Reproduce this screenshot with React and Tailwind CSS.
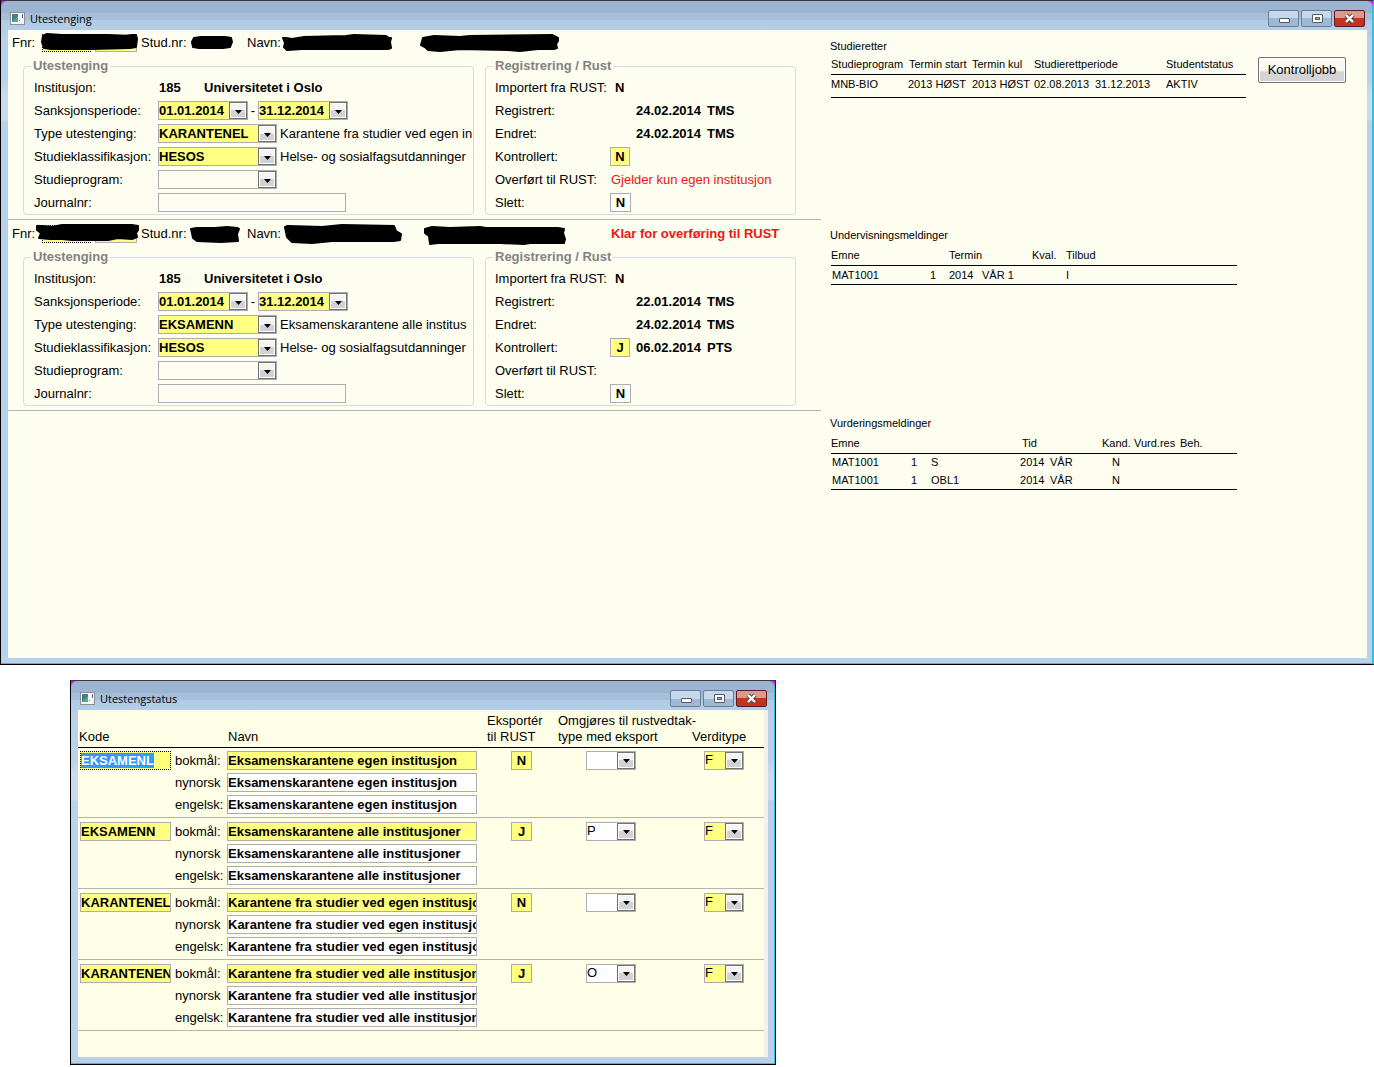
import clsx from "clsx";

const records = [
  {
    id: "r1",
    status: "",
    type: "KARANTENEL",
    typeText: "Karantene fra studier ved egen in",
    registered: "24.02.2014",
    changed: "24.02.2014",
    controlled: "N",
    controlledDate: "",
    controlledBy: "",
    transferred: "Gjelder kun egen institusjon",
    marks: {
      fnr: "M1 6 L5 4 L20 5 L66 5 L84 6 L90 5 L94 5 L95 9 L94 17 L88 18 L50 19 L14 19 L9 19 L2 18 L0 12 Z",
      studnr: "M3 8 L10 7 L34 7 L40 8 L41 12 L39 17 L32 18 L8 18 L2 17 L1 12 Z",
      name1: "M1 8 L4 8 L10 9 L22 7 L64 6 L72 5 L104 6 L107 8 L109 8 L108 12 L109 18 L106 19 L84 19 L20 19 L5 20 L2 17 L3 13 Z",
      name2: "M3 8 L14 6 L40 7 L50 6 L132 5 L138 8 L138 11 L136 14 L137 18 L134 19 L118 19 L100 21 L88 20 L40 19 L20 21 L8 20 L5 17 L1 15 Z",
    },
  },
  {
    id: "r2",
    status: "Klar for overføring til RUST",
    type: "EKSAMENN",
    typeText: "Eksamenskarantene alle institus",
    registered: "22.01.2014",
    changed: "24.02.2014",
    controlled: "J",
    controlledDate: "06.02.2014",
    controlledBy: "PTS",
    transferred: "",
    marks: {
      fnr: "M-5 5 L0 5 L10 6 L20 4 L60 4 L90 4 L96 5 L96 9 L94 12 L95 16 L90 18 L76 17 L66 19 L30 19 L20 18 L8 18 L-3 17 L-1 12 L-5 9 Z",
      studnr: "M0 8 L6 7 L24 7 L36 6 L46 7 L48 8 L46 13 L47 20 L30 21 L6 20 L2 17 L1 12 Z",
      name1: "M3 6 L6 5 L40 6 L60 4 L112 5 L114 10 L119 13 L118 19 L112 20 L50 20 L30 22 L10 21 L5 16 Z",
      name2: "M5 8 L12 6 L30 7 L60 6 L66 7 L138 7 L144 8 L143 12 L145 18 L144 22 L110 22 L104 23 L80 22 L18 22 L10 23 L9 15 L5 12 Z",
    },
  },
];

const statuses = [
  { code: "EKSAMENL", name: "Eksamenskarantene egen institusjon", exported: "N", convert: "" },
  { code: "EKSAMENN", name: "Eksamenskarantene alle institusjoner", exported: "J", convert: "P" },
  { code: "KARANTENEL", name: "Karantene fra studier ved egen institusjon", exported: "N", convert: "" },
  { code: "KARANTENEN", name: "Karantene fra studier ved alle institusjoner", exported: "J", convert: "O" },
];

const languages = ["bokmål:", "nynorsk", "engelsk:"];

function FormIcon() {
  return (
    <svg width="15" height="13" viewBox="0 0 15 13">
      <rect x="0.5" y="0.5" width="14" height="12" fill="#f4f6f8" stroke="#8b8f96" />
      <rect x="2" y="2" width="6" height="8" fill="#3f7f8f" />
      <path d="M2 10 L8 4 V10 Z" fill="#63a878" />
      <rect x="9" y="8" width="1" height="1" fill="#7a8894" />
      <rect x="12" y="2" width="1" height="4" fill="#4a6d9c" />
    </svg>
  );
}

function WindowButtons() {
  const plain =
    "flex h-[17px] w-[31px] items-center justify-center rounded-xs border border-[#6b7c93] bg-linear-to-b from-[#c6d8eb] from-50% to-[#9fb9d4] to-50%";
  return (
    <div className="flex gap-0.5">
      <button type="button" aria-label="Minimer" className={plain}>
        <svg width="12" height="11" viewBox="0 0 12 11">
          <rect x="1.5" y="5.5" width="10" height="4" rx="0.5" fill="#fff" stroke="#545b66" />
        </svg>
      </button>
      <button type="button" aria-label="Maksimer" className={plain}>
        <svg width="12" height="11" viewBox="0 0 12 11">
          <rect x="1.5" y="1.5" width="10" height="8" rx="0.5" fill="#fff" stroke="#545b66" />
          <rect x="4.5" y="4.5" width="4" height="2" fill="#9fb9d4" stroke="#545b66" />
        </svg>
      </button>
      <button
        type="button"
        aria-label="Lukk"
        className="flex h-[17px] w-[31px] items-center justify-center rounded-xs border border-[#5b1a22] bg-linear-to-b from-[#dd9a8c] from-45% to-[#c8301f] to-45%"
      >
        <svg width="13" height="11" viewBox="0 0 13 11">
          <path d="M3 2 L10 9 M10 2 L3 9" stroke="#4e4a58" strokeWidth="4.4" />
          <path d="M3 2 L10 9 M10 2 L3 9" stroke="#fff" strokeWidth="2.4" />
        </svg>
      </button>
    </div>
  );
}

function Window({ title, className, children }) {
  return (
    <section className={clsx("border border-black border-t-[#3a3a42] bg-[#ff00ff]", className)}>
      <div className="rounded-t-md border-r border-b border-[#35bfdc] bg-[linear-gradient(to_bottom,#9bb4d2_12px,#a5bfdb_12px,#a5bfdb_19px,#b1cbe5_19px,#b9d1ea_40px,#b9d1ea_80px,#c9dbee_92px,#c9dbee_119px,#b9d1ea_120px)] pr-[5px] pb-[5px] pl-[7px]">
        <header className="flex h-[29px] items-center justify-between pt-1.5 pr-0.5 pl-0.5">
          <div className="flex items-center gap-[5px]">
            <FormIcon />
            <h1 className="font-['Open_Sans',sans-serif] text-[11px] leading-4">{title}</h1>
          </div>
          <WindowButtons />
        </header>
        {children}
      </div>
    </section>
  );
}

function TextField({ yellow, className, ...props }) {
  return (
    <input
      type="text"
      className={clsx(
        "block h-[19px] border border-[#abadb3] px-0 font-bold outline-none",
        yellow ? "bg-[#ffff80]" : "bg-transparent",
        className
      )}
      {...props}
    />
  );
}

// The arrow shares the select's grid cell, so a click on it still opens the list
function Combo({ value, yellow, className, ...props }) {
  return (
    <span className={clsx("inline-grid h-[19px]", className)}>
      <select
        defaultValue={value}
        className={clsx(
          "col-start-1 row-start-1 h-[19px] w-full appearance-none border border-[#abadb3] pr-4 outline-none",
          yellow ? "bg-[#ffff80]" : "bg-transparent"
        )}
        {...props}
      >
        <option value={value}>{value}</option>
      </select>
      <span className="pointer-events-none col-start-1 row-start-1 mr-px flex h-[17px] w-[18px] items-center justify-center self-center justify-self-end border border-[#707070] bg-linear-to-b from-[#f4f4f2] from-50% to-[#d2d2d2] to-50% pt-0.5 ring-1 ring-white ring-inset">
        <svg width="7" height="4" viewBox="0 0 7 4">
          <path d="M0 0 H7 L3.5 4 Z" fill="#000" />
        </svg>
      </span>
    </span>
  );
}

function Mark({ d }) {
  return (
    <svg width="10" height="26" className="overflow-visible" aria-hidden="true">
      <path d={d} fill="#000" stroke="#000" strokeWidth="2" strokeLinejoin="round" />
    </svg>
  );
}

function Group({ title, className, children }) {
  return (
    <fieldset className={clsx("rounded-sm border border-[#d3dbe2]", className)}>
      <legend className="ml-[7px] h-5 px-0.5 leading-5 font-bold text-[#828282]">{title}</legend>
      {children}
    </fieldset>
  );
}

function Row({ label, htmlFor, cols, children }) {
  const Tag = htmlFor ? "label" : "span";
  return (
    <div className={clsx("grid h-[23px] items-center", cols)}>
      <Tag htmlFor={htmlFor} className="whitespace-nowrap">
        {label}
      </Tag>
      {children}
    </div>
  );
}

function Record({ record }) {
  const { id, marks } = record;
  const left = "grid-cols-[124px_1fr] pl-2.5";
  const right = "grid-cols-[115px_26px_71px_1fr] pl-[9px]";
  return (
    <article className="border-b border-[#b4b4b4] pt-px pb-1 first:pt-0">
      <div className="grid h-[26px] grid-cols-[30px_99px_50px_56px_35px_138px_191px_1fr] items-center pl-1 whitespace-nowrap">
        <label htmlFor={`${id}-fnr`}>Fnr:</label>
        <div className="relative flex gap-1">
          <input id={`${id}-fnr`} className="h-[18px] w-[49px] border border-dotted border-black bg-[#ffff80] outline-none" />
          <input aria-label="Personnr" className="h-[18px] w-[42px] border border-[#abadb3] bg-[#ffff80] outline-none" />
          <div className="absolute -top-1 left-0">
            <Mark d={marks.fnr} />
          </div>
        </div>
        <span>Stud.nr:</span>
        <Mark d={marks.studnr} />
        <span>Navn:</span>
        <Mark d={marks.name1} />
        <Mark d={marks.name2} />
        <strong className="text-[#f01414]">{record.status}</strong>
      </div>

      <div className="flex gap-[11px] pl-[15px]">
        <Group title="Utestenging" className="w-[451px]">
          <Row label="Institusjon:" cols={left}>
            <div className="flex pl-px font-bold">
              <span className="w-[45px]">185</span>
              <span>Universitetet i Oslo</span>
            </div>
          </Row>
          <Row label="Sanksjonsperiode:" htmlFor={`${id}-from`} cols={left}>
            <div className="flex items-center">
              <Combo id={`${id}-from`} value="01.01.2014" yellow className="w-[90px] font-bold" />
              <span className="w-2.5 text-center">-</span>
              <Combo aria-label="Til dato" value="31.12.2014" yellow className="w-[90px] font-bold" />
            </div>
          </Row>
          <Row label="Type utestenging:" htmlFor={`${id}-type`} cols={left}>
            <div className="flex items-center gap-[3px]">
              <Combo id={`${id}-type`} value={record.type} yellow className="w-[119px] shrink-0 font-bold" />
              <span className="whitespace-nowrap">{record.typeText}</span>
            </div>
          </Row>
          <Row label="Studieklassifikasjon:" htmlFor={`${id}-class`} cols={left}>
            <div className="flex items-center gap-[3px]">
              <Combo id={`${id}-class`} value="HESOS" yellow className="w-[119px] shrink-0 font-bold" />
              <span className="whitespace-nowrap">Helse- og sosialfagsutdanninger</span>
            </div>
          </Row>
          <Row label="Studieprogram:" htmlFor={`${id}-program`} cols={left}>
            <Combo id={`${id}-program`} value="" className="w-[119px]" />
          </Row>
          <Row label="Journalnr:" htmlFor={`${id}-journal`} cols={left}>
            <TextField id={`${id}-journal`} className="w-[188px]" />
          </Row>
        </Group>

        <Group title="Registrering / Rust" className="w-[311px]">
          <Row label="Importert fra RUST:" cols={right}>
            <strong className="pl-[5px]">N</strong>
          </Row>
          <Row label="Registrert:" cols={right}>
            <strong className="col-start-3">{record.registered}</strong>
            <strong>TMS</strong>
          </Row>
          <Row label="Endret:" cols={right}>
            <strong className="col-start-3">{record.changed}</strong>
            <strong>TMS</strong>
          </Row>
          <Row label="Kontrollert:" htmlFor={`${id}-control`} cols={right}>
            <TextField id={`${id}-control`} defaultValue={record.controlled} yellow className="w-5 text-center" />
            <strong>{record.controlledDate}</strong>
            <strong>{record.controlledBy}</strong>
          </Row>
          <Row label="Overført til RUST:" cols={right}>
            <span className="col-span-3 pl-px text-[#f01414]">{record.transferred}</span>
          </Row>
          <Row label="Slett:" htmlFor={`${id}-delete`} cols={right}>
            <TextField id={`${id}-delete`} defaultValue="N" className="w-[21px] text-center" />
          </Row>
        </Group>
      </div>
    </article>
  );
}

function Columns({ widths }) {
  return (
    <colgroup>
      {widths.map((w, i) => (
        <col key={i} className={w} />
      ))}
    </colgroup>
  );
}

const tableClass = "table-fixed border-collapse text-left leading-4 whitespace-nowrap [&_th]:h-5 [&_th]:p-0 [&_th]:font-normal";

function Reports() {
  return (
    <div className="w-[416px] pt-2 text-[11px]">
      <section className="min-h-[189px]">
        <h2 className="leading-4">Studieretter</h2>
        <table className={clsx(tableClass, "ml-px w-[415px]")}>
          <Columns widths={["w-[77px]", "w-[64px]", "w-[62px]", "w-[61px]", "w-[71px]", ""]} />
          <thead>
            <tr className="border-b border-black">
              <th>Studieprogram</th>
              <th className="pl-px!">Termin start</th>
              <th>Termin kul</th>
              <th colSpan={2}>Studierettperiode</th>
              <th>Studentstatus</th>
            </tr>
          </thead>
          <tbody>
            <tr className="h-[23px] border-b border-black [&_td]:pb-1">
              <td>MNB-BIO</td>
              <td>2013 HØST</td>
              <td>2013 HØST</td>
              <td>02.08.2013</td>
              <td>31.12.2013</td>
              <td>AKTIV</td>
            </tr>
          </tbody>
        </table>
      </section>

      <section className="min-h-[188px]">
        <h2 className="mb-0.5 leading-4">Undervisningsmeldinger</h2>
        <table className={clsx(tableClass, "ml-px w-[406px]")}>
          <Columns widths={["w-[99px]", "w-[19px]", "w-[33px]", "w-[50px]", "w-[34px]", ""]} />
          <thead>
            <tr className="border-b border-black">
              <th colSpan={2}>Emne</th>
              <th colSpan={2}>Termin</th>
              <th>Kval.</th>
              <th>Tilbud</th>
            </tr>
          </thead>
          <tbody>
            <tr className="h-[19px] border-b border-black">
              <td className="pl-px">MAT1001</td>
              <td>1</td>
              <td>2014</td>
              <td>VÅR 1</td>
              <td />
              <td>I</td>
            </tr>
          </tbody>
        </table>
      </section>

      <section>
        <h2 className="mb-0.5 leading-4">Vurderingsmeldinger</h2>
        <table className={clsx(tableClass, "ml-px w-[406px]")}>
          <Columns
            widths={["w-[80px]", "w-[20px]", "w-[89px]", "w-[30px]", "w-[52px]", "w-[32px]", "w-[46px]", ""]}
          />
          <thead>
            <tr className="border-b border-black">
              <th colSpan={3}>Emne</th>
              <th colSpan={2} className="pl-0.5!">Tid</th>
              <th>Kand.</th>
              <th>Vurd.res</th>
              <th>Beh.</th>
            </tr>
          </thead>
          <tbody className="border-b border-black">
            {["S", "OBL1"].map((part) => (
              <tr key={part} className="h-[18px]">
                <td className="pl-px">MAT1001</td>
                <td>1</td>
                <td>{part}</td>
                <td>2014</td>
                <td>VÅR</td>
                <td className="pl-2.5">N</td>
                <td />
                <td />
              </tr>
            ))}
          </tbody>
        </table>
      </section>
    </div>
  );
}

function StatusTable() {
  return (
    <table className="w-full table-fixed border-collapse text-left whitespace-nowrap [&_td]:p-0 [&_td]:align-top [&_th]:p-0 [&_th]:pb-0.5 [&_th]:align-bottom [&_th]:font-normal">
      <Columns widths={["w-[97px]", "w-[52px]", "w-[260px]", "w-[71px]", "w-[134px]", ""]} />
      <thead>
        <tr className="h-[37px] border-b border-black leading-4">
          <th className="pl-px!">Kode</th>
          <th />
          <th className="pl-px!">Navn</th>
          <th>
            Eksportér
            <br />
            til RUST
          </th>
          <th>
            Omgjøres til rustvedtak-
            <br />
            type med eksport
          </th>
          <th>Verditype</th>
        </tr>
      </thead>
      <tbody>
        {statuses.map((status, i) => (
          <tr key={status.code} className="h-[71px] border-b border-[#b4b4b4] first:h-[70px] [&_td]:pt-1 first:[&_td]:pt-[3px]">
            <td>
              <TextField
                aria-label="Kode"
                defaultValue={status.code}
                yellow
                autoFocus={i === 0}
                onFocus={(e) => e.target.select()}
                className="ml-0.5 w-[91px] selection:bg-[#3399ff] selection:text-white focus:border-dotted focus:border-black"
              />
            </td>
            <td>
              <div className="flex flex-col gap-[3px] leading-[19px]">
                {languages.map((language, n) => (
                  <label key={language} htmlFor={`name-${i}-${n}`}>
                    {language}
                  </label>
                ))}
              </div>
            </td>
            <td>
              <div className="flex flex-col gap-[3px]">
                {languages.map((language, n) => (
                  <TextField
                    key={language}
                    id={`name-${i}-${n}`}
                    defaultValue={status.name}
                    yellow={n === 0}
                    className={clsx("w-[250px]", n > 0 && "bg-white!")}
                  />
                ))}
              </div>
            </td>
            <td>
              <TextField
                aria-label="Eksportér til RUST"
                defaultValue={status.exported}
                yellow
                className="ml-6 w-[21px] text-center"
              />
            </td>
            <td>
              <Combo aria-label="Omgjøres til" value={status.convert} className="ml-7 w-[50px] bg-white" />
            </td>
            <td>
              <Combo aria-label="Verditype" value="F" yellow className="ml-3 w-10" />
            </td>
          </tr>
        ))}
      </tbody>
    </table>
  );
}

export default function App() {
  return (
    <div className="flex min-w-[1374px] flex-col items-start gap-[15px] bg-white font-['Liberation_Sans',Arial,sans-serif] text-[13px] leading-4 text-black">
      <Window title="Utestenging" className="w-full border-r-[#35bfdc]!">
        <main className="flex min-h-[628px] bg-[#fdfdf0]">
          <div className="w-[813px] shrink-0">
            {records.map((record) => (
              <Record key={record.id} record={record} />
            ))}
          </div>
          <div className="flex flex-1 items-start gap-3 pl-[9px]">
            <Reports />
            <button
              type="button"
              className="mt-[27px] h-[26px] w-[88px] rounded-xs border border-[#707070] bg-linear-to-b from-[#f8f7f0] from-50% to-[#d4d4d4] to-60% ring-1 ring-white ring-inset"
            >
              Kontrolljobb
            </button>
          </div>
        </main>
      </Window>

      <Window title="Utestengstatus" className="ml-[70px] w-[706px]">
        <main className="mr-px mb-px min-h-[347px] border-r-4 border-[#f0f0f0] bg-[#ffffe8]">
          <StatusTable />
        </main>
      </Window>
    </div>
  );
}
